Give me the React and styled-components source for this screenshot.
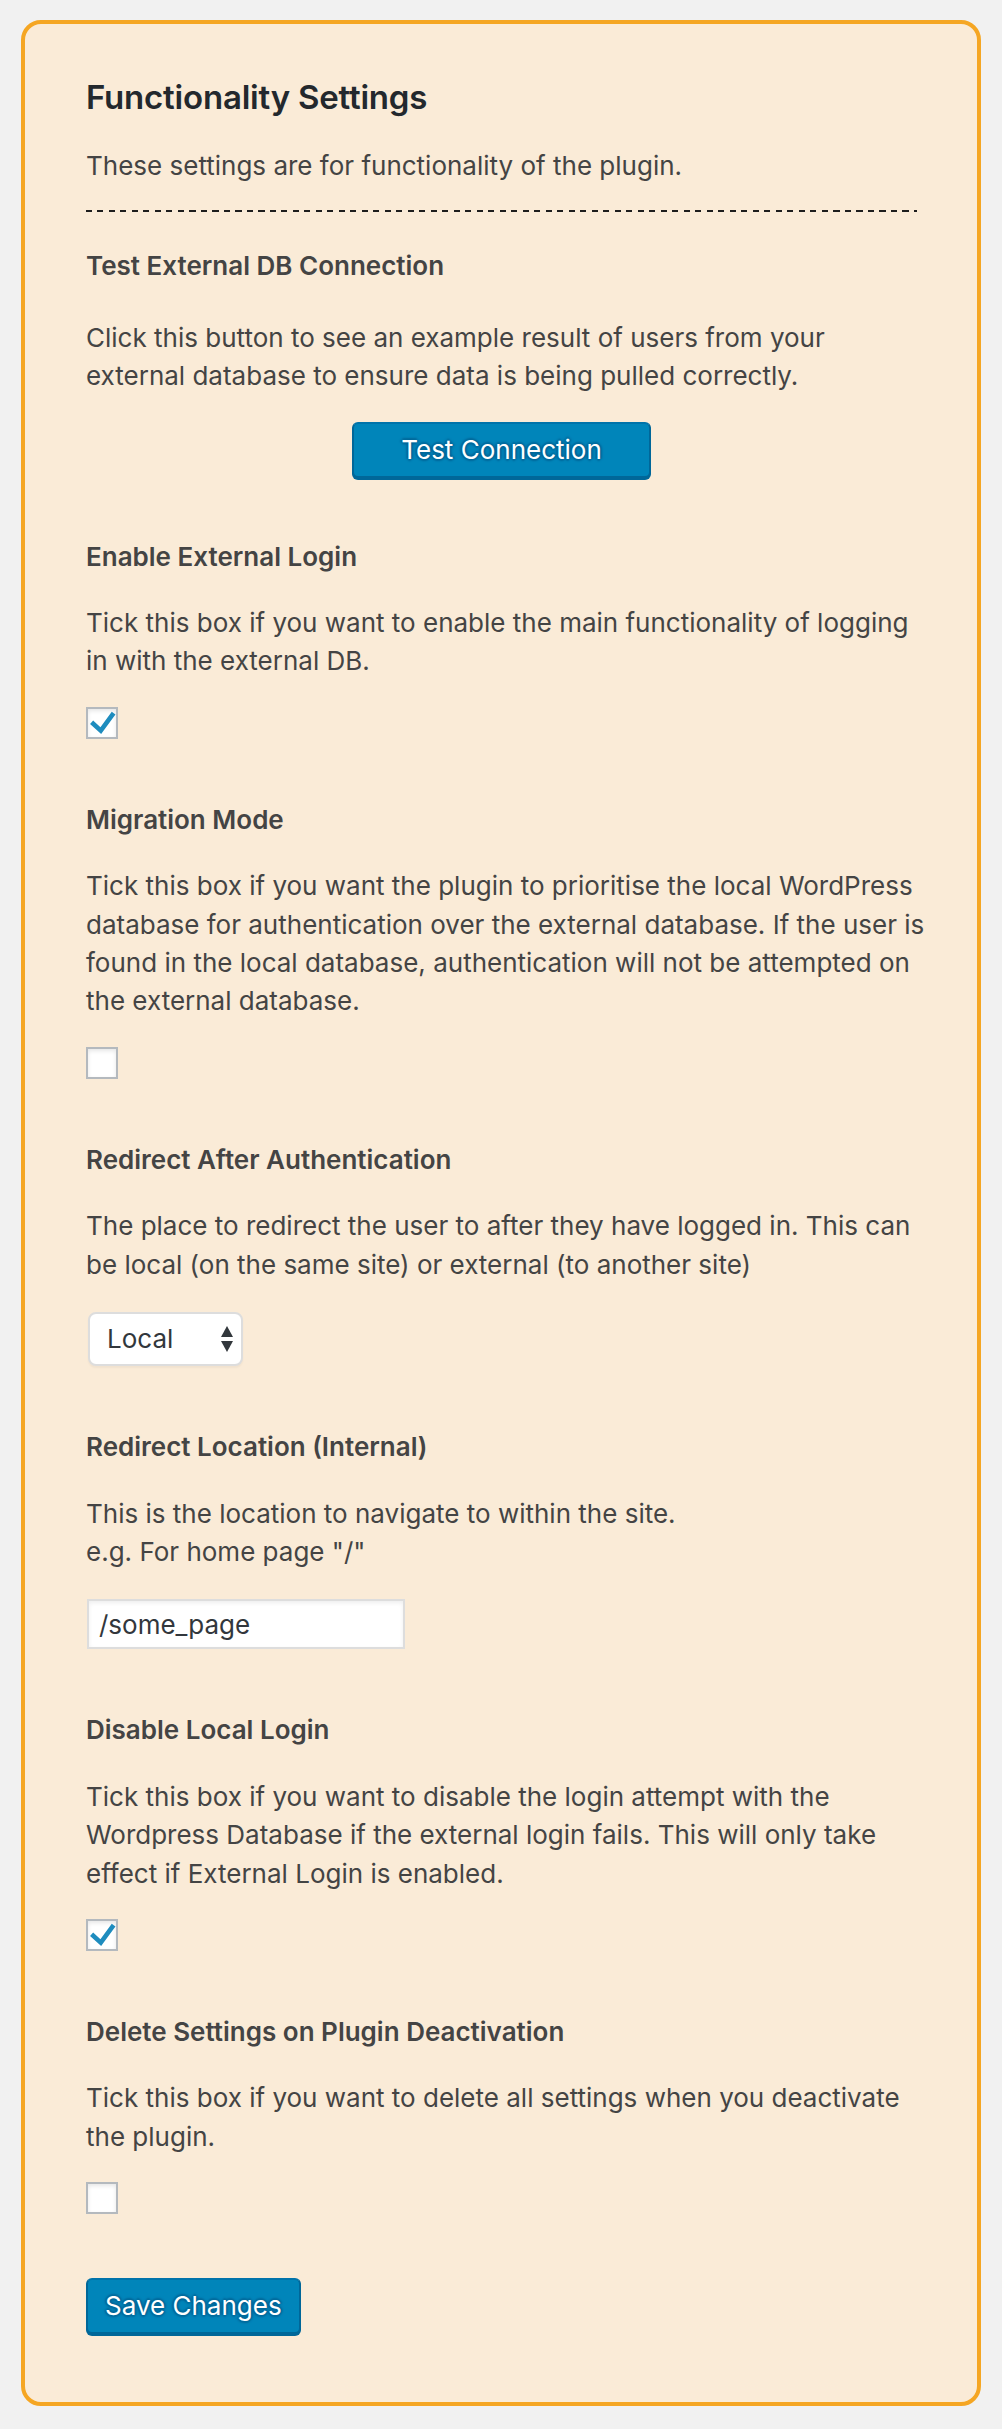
import React from 'react';
import styled, { createGlobalStyle } from 'styled-components';

const GlobalStyle = createGlobalStyle`
  html, body {
    margin: 0;
    padding: 0;
    background: #f1f1f1;
  }
  body {
    font-family: Inter, "Noto Sans", "Liberation Sans", sans-serif;
    color: #444;
  }
`;

const sections = [
  {
    title: 'Test External DB Connection',
    lines: [
      'Click this button to see an example result of users from your',
      'external database to ensure data is being pulled correctly.',
    ],
    control: 'button',
  },
  {
    title: 'Enable External Login',
    lines: [
      'Tick this box if you want to enable the main functionality of logging',
      'in with the external DB.',
    ],
    control: 'checkbox',
    checked: true,
  },
  {
    title: 'Migration Mode',
    lines: [
      'Tick this box if you want the plugin to prioritise the local WordPress',
      'database for authentication over the external database. If the user is',
      'found in the local database, authentication will not be attempted on',
      'the external database.',
    ],
    control: 'checkbox',
    checked: false,
  },
  {
    title: 'Redirect After Authentication',
    lines: [
      'The place to redirect the user to after they have logged in. This can',
      'be local (on the same site) or external (to another site)',
    ],
    control: 'select',
  },
  {
    title: 'Redirect Location (Internal)',
    lines: [
      'This is the location to navigate to within the site.',
      'e.g. For home page "/"',
    ],
    control: 'input',
  },
  {
    title: 'Disable Local Login',
    lines: [
      'Tick this box if you want to disable the login attempt with the',
      'Wordpress Database if the external login fails. This will only take',
      'effect if External Login is enabled.',
    ],
    control: 'checkbox',
    checked: true,
  },
  {
    title: 'Delete Settings on Plugin Deactivation',
    lines: [
      'Tick this box if you want to delete all settings when you deactivate',
      'the plugin.',
    ],
    control: 'checkbox',
    checked: false,
  },
];

const controlGap = { button: 26, checkbox: 26, select: 28, input: 28 };

function Control({ type, checked }) {
  if (type === 'button') {
    return (
      <Centered>
        <PrimaryButton type="button" $wide>Test Connection</PrimaryButton>
      </Centered>
    );
  }
  if (type === 'checkbox') {
    return (
      <CheckBox role="checkbox" aria-checked={checked}>
        {checked && (
          <svg width="32" height="32" viewBox="0 0 32 32">
            <path
              d="M5.6 15.2 L14.8 23.6 L27.6 6.2"
              fill="none"
              stroke="#1e8cbe"
              strokeWidth="4.6"
              strokeLinejoin="miter"
            />
          </svg>
        )}
      </CheckBox>
    );
  }
  if (type === 'select') {
    return (
      <SelectWrap>
        <SelectBox>Local</SelectBox>
        <Arrows width="14" height="28" viewBox="0 0 14 28">
          <path d="M7 0 L13 11 L1 11 Z" fill="#32373c" />
          <path d="M1 15 L13 15 L7 26 Z" fill="#32373c" />
        </Arrows>
      </SelectWrap>
    );
  }
  return <TextInput type="text" defaultValue="/some_page" />;
}

export default function App() {
  return (
    <>
      <GlobalStyle />
      <Page>
        <Panel>
          <Title>Functionality Settings</Title>
          <Intro>These settings are for functionality of the plugin.</Intro>
          <Divider />
          {sections.map((s, i) => (
            <Section key={s.title} $top={i === 0 ? 35 : i === 1 ? 60 : 62}>
              <Heading $gap={i === 0 ? 33 : 28}>{s.title}</Heading>
              <Description>
                {s.lines.map((line, j) => (
                  <React.Fragment key={j}>
                    {j > 0 && <br />}
                    {line}
                  </React.Fragment>
                ))}
              </Description>
              <ControlRow $gap={controlGap[s.control]}>
                <Control type={s.control} checked={s.checked} />
              </ControlRow>
            </Section>
          ))}
          <SubmitRow>
            <PrimaryButton type="button">Save Changes</PrimaryButton>
          </SubmitRow>
        </Panel>
      </Page>
    </>
  );
}

const Page = styled.div`
  padding: 20px 21px 23px;
`;

const Panel = styled.div`
  background: #faebd7;
  border: 4px solid #f5a623;
  border-radius: 20px;
  padding: 52px 60px 68px 61px;
  display: flex;
  flex-direction: column;
`;

const Title = styled.h2`
  margin: 0;
  font-size: 33px;
  line-height: 43px;
  font-weight: 600;
  color: #23282d;
  letter-spacing: -0.2px;
`;

const Intro = styled.p`
  margin: 28px 0 0;
  font-size: 26px;
  line-height: 38.4px;
  color: #444;
`;

const Divider = styled.div`
  margin-top: 25px;
  height: 2px;
  background: repeating-linear-gradient(90deg, #1d1d1d 0 6px, transparent 6px 11.5px);
`;

const Section = styled.section`
  margin-top: ${(p) => p.$top}px;
  display: flex;
  flex-direction: column;
`;

const Heading = styled.h3`
  margin: 0 0 ${(p) => p.$gap}px;
  font-size: 26px;
  line-height: 38.4px;
  font-weight: 600;
  color: #444;
`;

const Description = styled.p`
  margin: 0;
  font-size: 26px;
  line-height: 38.4px;
  color: #444;
  white-space: nowrap;
`;

const ControlRow = styled.div`
  margin-top: ${(p) => p.$gap}px;
  display: flex;
`;

const Centered = styled.div`
  flex: 1;
  display: flex;
  justify-content: center;
`;

const PrimaryButton = styled.button`
  box-sizing: border-box;
  height: 56px;
  ${(p) => (p.$wide ? 'width: 299px;' : '')}
  padding: 0 17px 2px;
  font-family: Inter, "Noto Sans", "Liberation Sans", sans-serif;
  font-size: 26px;
  line-height: 52px;
  color: #fff;
  background: #0085ba;
  border: 2px solid #0073aa;
  border-color: #0073aa #006799 #006799;
  border-radius: 6px;
  box-shadow: 0 2px 0 #006799;
  text-shadow: 0 -2px 2px #006799, 2px 0 2px #006799, 0 2px 2px #006799,
    -2px 0 2px #006799;
  cursor: pointer;
`;

const CheckBox = styled.span`
  box-sizing: border-box;
  width: 32px;
  height: 32px;
  display: block;
  position: relative;
  background: #fff;
  border: 2px solid #b4b9be;
  box-shadow: inset 0 2px 4px rgba(0, 0, 0, 0.1);

  svg {
    position: absolute;
    left: -2px;
    top: -2px;
  }
`;

const SelectWrap = styled.div`
  position: relative;
  margin-left: 2px;
`;

const SelectBox = styled.div`
  box-sizing: border-box;
  width: 155px;
  height: 54px;
  padding: 0 0 0 17px;
  font-size: 26px;
  line-height: 50px;
  color: #32373c;
  background: #fff;
  border: 2px solid #ddd;
  border-radius: 8px;
  box-shadow: 0 2px 2px rgba(0, 0, 0, 0.04);
`;

const Arrows = styled.svg`
  position: absolute;
  right: 9px;
  top: 14px;
`;

const TextInput = styled.input`
  box-sizing: border-box;
  width: 318px;
  height: 50px;
  margin: 0 0 0 1px;
  padding: 0 10px;
  font-family: Inter, "Noto Sans", "Liberation Sans", sans-serif;
  font-size: 26px;
  color: #32373c;
  background: #fff;
  border: 2px solid #ddd;
  box-shadow: inset 0 2px 4px rgba(0, 0, 0, 0.07);
  outline: none;
`;

const SubmitRow = styled.div`
  margin-top: 64px;
  display: flex;
`;
